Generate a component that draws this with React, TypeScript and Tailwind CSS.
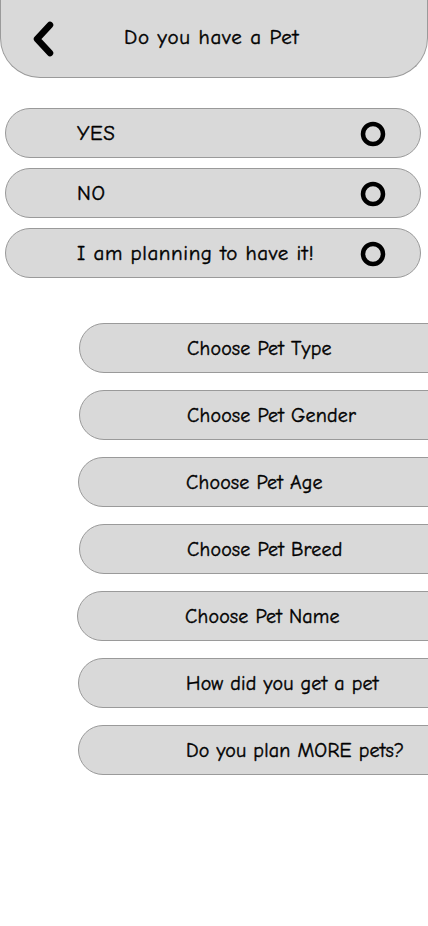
import React from "react";

const font = { fontFamily: '"Comic Neue", Lato, "Noto Sans", sans-serif' };

function Ring() {
  return (
    <svg width="26" height="26" viewBox="0 0 26 26">
      <circle cx="13" cy="13" r="10" fill="none" stroke="#000" strokeWidth="4.5" />
    </svg>
  );
}

export default function App() {
  const options = ["YES", "NO", "I am planning to have it!"];
  const buttons: [string, number][] = [
    ["Choose Pet Type", 79],
    ["Choose Pet Gender", 79],
    ["Choose Pet Age", 78],
    ["Choose Pet Breed", 79],
    ["Choose Pet Name", 77],
    ["How did you get a pet", 78],
    ["Do you plan MORE pets?", 78],
  ];
  return (
    <div className="w-[428px] h-[926px] bg-white overflow-hidden text-black" style={font}>
      <div className="h-[78px] bg-[#d9d9d9] border-x border-b border-[#9a9a9a] rounded-b-[40px] flex items-center">
        <div className="w-[123px] pl-[29px] flex items-center">
          <svg width="26" height="36" viewBox="0 0 26 36">
            <path d="M20 4 L7 18 L20 32" fill="none" stroke="#000" strokeWidth="6.5" strokeLinecap="round" strokeLinejoin="round" />
          </svg>
        </div>
        <span className="text-[21px] tracking-[0.75px] [-webkit-text-stroke:0.4px_black] pb-[1px]">Do you have a Pet</span>
      </div>

      <div className="mt-[30px] pl-[5px] pr-[7px] flex flex-col gap-[10px]">
        {options.map((o) => (
          <div
            key={o}
            className="h-[50px] bg-[#d9d9d9] border border-[#9a9a9a] rounded-[25px] flex items-center pl-[71px] pr-[34px] pt-[2px] justify-between"
          >
            <span className="text-[21px] tracking-[0.6px] [-webkit-text-stroke:0.4px_black]">{o}</span>
            <Ring />
          </div>
        ))}
      </div>

      <div className="mt-[45px] flex flex-col gap-[17px]">
        {buttons.map(([b, l]) => (
          <div key={b} className="flex" style={{ paddingLeft: l }}>
            <div className="h-[50px] w-[380px] shrink-0 bg-[#d9d9d9] border border-[#9a9a9a] rounded-[25px] flex items-center pl-[107px] pt-[2px]">
              <span className="text-[20px] tracking-[0.2px] [-webkit-text-stroke:0.4px_black] whitespace-nowrap">{b}</span>
            </div>
          </div>
        ))}
      </div>
    </div>
  );
}
